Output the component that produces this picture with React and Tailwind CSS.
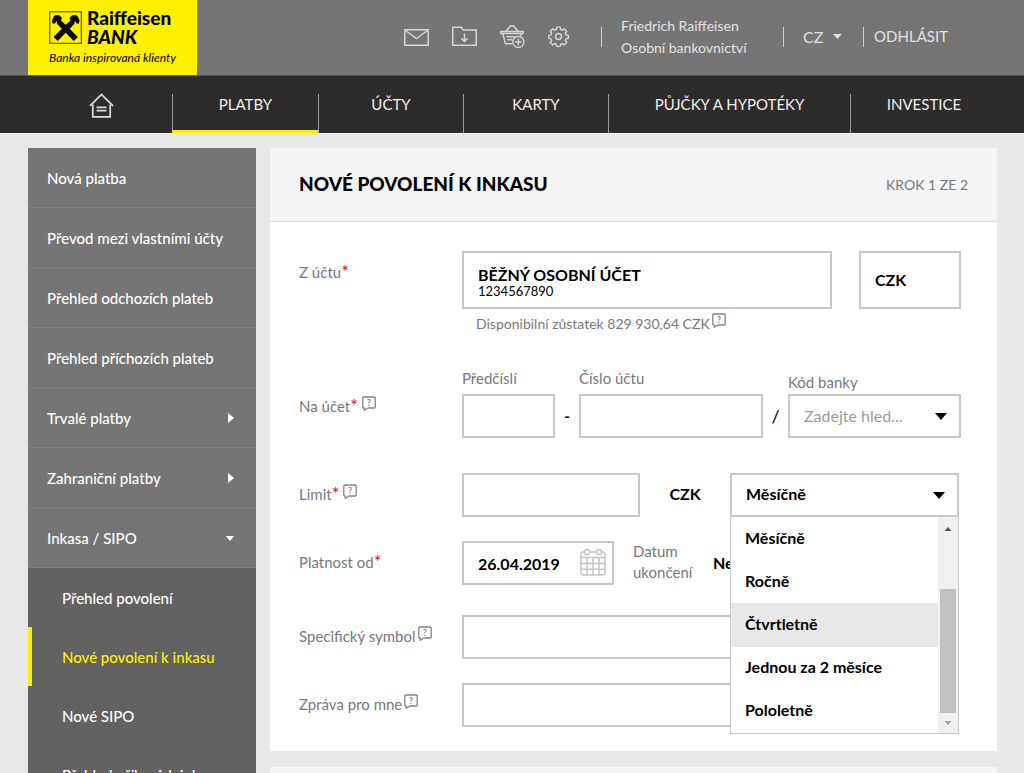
const SIDE_ITEMS = [
  { label: 'Nová platba' },
  { label: 'Převod mezi vlastními účty' },
  { label: 'Přehled odchozích plateb' },
  { label: 'Přehled příchozích plateb' },
  { label: 'Trvalé platby', arrow: 'right' },
  { label: 'Zahraniční platby', arrow: 'right' },
  { label: 'Inkasa / SIPO', arrow: 'down' },
];

const SUB_ITEMS = [
  { label: 'Přehled povolení' },
  { label: 'Nové povolení k inkasu', active: true },
  { label: 'Nové SIPO' },
  { label: 'Přehled příkazů k inkasu' },
];

const NAV_ITEMS = [
  { label: 'PLATBY', active: true },
  { label: 'ÚČTY' },
  { label: 'KARTY' },
  { label: 'PŮJČKY A HYPOTÉKY' },
  { label: 'INVESTICE' },
];

const FREQUENCIES = ['Měsíčně', 'Ročně', 'Čtvrtletně', 'Jednou za 2 měsíce', 'Pololetně'];

const BOX = 'h-11 w-full min-w-0 border-2 border-[#c8c8c8] bg-white px-3.5 text-[16px] font-bold text-black outline-none';

function Caret({ className }) {
  return (
    <svg viewBox="0 0 12 7" className={className} fill="currentColor" aria-hidden="true">
      <path d="M0 0h12L6 7z" />
    </svg>
  );
}

function Help() {
  return (
    <button type="button" aria-label="Nápověda" className="block h-[15px] w-3.5 shrink-0 text-[#808285]">
      <svg viewBox="0 0 14 15" className="h-full w-full" fill="none" stroke="currentColor" aria-hidden="true">
        <path d="M1.7 1h10.6q.9 0 .9.9v9.2q0 .9-.9.9H6L2.2 14.2V12H1.7q-.9 0-.9-.9V1.900q0-.9.9-.9z" strokeWidth="1.3" strokeLinejoin="round" />
        <text x="7" y="9.700" textAnchor="middle" fontSize="8.500" fontWeight="700" fill="currentColor" stroke="none">?</text>
      </svg>
    </button>
  );
}

function Label({ htmlFor, required, help, spaced, children, className = 'pt-[11px]' }) {
  return (
    <div className={`flex items-start ${className}`}>
      <label htmlFor={htmlFor} className="leading-5">
        {children}
        {required && <span className="text-[18px] leading-none text-[#e2001a]">*</span>}
      </label>
      {help && <span className={spaced ? 'ml-1' : 'ml-0.5'}><Help /></span>}
    </div>
  );
}

function Logo() {
  return (
    <a href="#" aria-label="Raiffeisenbank" className="block h-[75px] w-[169px] bg-[#fff000] pl-[21px] pt-2 text-black">
      <span className="flex gap-1">
        <svg viewBox="0 0 34 34" className="mt-[3px] h-[34px] w-[34px] shrink-0" aria-hidden="true">
          <rect x="0.800" y="0.800" width="31.500" height="31.500" fill="none" stroke="#3a3700" strokeWidth="1" />
          <g fill="#0c0b00">
            <path d="M4.500 26 17 13.500 21.500 9.500 20.500 7.200 23 4.200 27 4 28.800 5.600 30.600 9.600 29.800 12.800 27.200 12.200 26.400 10.200 25.600 10.600 25.600 12.800 8.700 30z" />
            <path d="M28.900 26 16.400 13.500 12 9.500 13 7.200 10.500 4.200 6.500 4 4.700 5.600 2.900 9.600 3.700 12.800 6.300 12.200 7.100 10.200 7.900 10.600 7.900 12.800 24.700 30z" />
          </g>
        </svg>
        <span className="flex flex-col text-[19px] font-black leading-5">
          <span>Raiffeisen</span>
          <em className="-mt-px">BANK</em>
        </span>
      </span>
      <em className="block whitespace-nowrap pt-0.5 text-[12px] leading-[18px]">Banka inspirovaná klienty</em>
    </a>
  );
}

function HeaderIcons() {
  return (
    <div className="flex items-center gap-[23px] text-[#d6d6d6]">
      <button type="button" aria-label="Zprávy" className="w-[25px]">
        <svg viewBox="0 0 25 22" className="block h-[22px] w-[25px]" fill="none" stroke="currentColor" strokeWidth="1.5" aria-hidden="true">
          <path d="M.8 3.800h23.400v15.400H.8z" />
          <path d="M1 4l11.500 8.500L24 4" />
        </svg>
      </button>
      <button type="button" aria-label="Dokumenty" className="w-[25px]">
        <svg viewBox="0 0 25 22" className="block h-[22px] w-[25px]" fill="none" stroke="currentColor" strokeWidth="1.5" aria-hidden="true">
          <path d="M.8 19.200V1.300h8.400l2 2.600h13v15.300z" />
          <path d="M12.500 7.500v8M9.500 12.500l3 3 3-3" />
        </svg>
      </button>
      <button type="button" aria-label="Košík" className="w-[25px]">
        <svg viewBox="0 0 25 24" className="block h-6 w-[25px]" fill="none" stroke="currentColor" strokeWidth="1.400" strokeLinecap="round" strokeLinejoin="round" aria-hidden="true">
          <path d="M.8 6.500h22.400v2H.8z" />
          <path d="M6 6.300 10.200 1h3.600L18 6.300" />
          <path d="M2.800 8.700 5.500 18.700h6M21.300 8.700l-.6 2" />
          <path d="M7 11.700h8M7.700 14.700h4" />
          <circle cx="18.300" cy="17" r="5.500" />
          <path d="M18.300 14.300v5.400M15.600 17H21" />
        </svg>
      </button>
      <button type="button" aria-label="Nastavení" className="w-[21px]">
        <svg viewBox="0 0 22 22" className="block h-[21px] w-[21px]" fill="none" stroke="currentColor" strokeWidth="1.500" strokeLinejoin="round" aria-hidden="true">
          <path d="M9.200 1.200h3.600l.5 2.500 1.700.7 2.100-1.400 2.500 2.500-1.400 2.100.7 1.700 2.400.5v2.900l-2.400.8-.7 1.700 1.400 2.100-2.500 2.500-2.100-1.400-1.700.7-.5 2.400H9.200l-.5-2.400-1.700-.7-2.100 1.400-2.500-2.500 1.400-2.100-.7-1.700L.8 12.700V9.800l2.300-.5.700-1.700-1.400-2.100L4.900 3 7 4.400l1.700-.7z" />
          <circle cx="11" cy="11" r="3.100" />
        </svg>
      </button>
    </div>
  );
}

function CalendarIcon() {
  return (
    <svg viewBox="0 0 26 28" className="h-7 w-[26px]" fill="none" stroke="#c4c4c4" strokeWidth="1.500" aria-hidden="true">
      <rect x="1" y="4" width="24" height="23" rx="2.500" />
      <path d="M1 9.500h24M1 15.500h24M1 21.200h24M7 9.500V27M13 9.500V27M19 9.500V27" />
      <circle cx="7" cy="4" r="2.600" fill="#fff" />
      <circle cx="19" cy="4" r="2.600" fill="#fff" />
    </svg>
  );
}

function Header() {
  return (
    <header className="flex justify-between border-b border-[#555] bg-[#757575] pl-7 pr-[76px] text-[#e2e2e2]">
      <Logo />
      <div className="flex items-center pb-0.5">
        <HeaderIcons />
        <div className="ml-8 flex h-5 items-center border-l border-[#d0d0d0] pl-[19px]">
          <p className="w-[162px] text-[14px] leading-[22px]">
            Friedrich Raiffeisen
            <br />
            Osobní bankovnictví
          </p>
        </div>
        <button type="button" className="flex h-5 w-20 items-center gap-2.5 border-l border-[#d0d0d0] pl-[19px] text-[16px]">
          CZ
          <Caret className="h-[5px] w-[9px]" />
        </button>
        <a href="#" className="flex h-5 items-center border-l border-[#d0d0d0] pl-2.5 text-[15px]">ODHLÁSIT</a>
      </div>
    </header>
  );
}

function MainNav() {
  return (
    <nav className="grid grid-cols-[144fr_146fr_145fr_145fr_242fr_147fr] border-b border-white bg-[#2d2c2a] pl-7 pr-[27px] text-[15px] text-[#f0f0f0]">
      <a href="#" aria-label="Domů" className="flex h-[57px] items-center justify-center pl-0.5 pt-0.5">
        <svg viewBox="0 0 25 25" className="h-[25px] w-[25px]" fill="none" stroke="#dcdcdc" strokeWidth="1.700" aria-hidden="true">
          <path d="M3.800 11.500v12.300h17.400V11.500" />
          <path d="M1 12.800 12.500 1.500 24 12.800" />
          <path d="M7.500 14.300h10M7.500 17.700h10" />
        </svg>
      </a>
      {NAV_ITEMS.map((item) => (
        <div key={item.label} className={`flex items-end ${item.active ? 'border-b-[3px] border-[#ffed00]' : ''}`}>
          <a
            href="#"
            className={`flex w-full justify-center border-l border-[#9a9a9a] leading-5 ${item.active ? 'h-9' : 'h-[39px]'}`}
          >
            {item.label}
          </a>
        </div>
      ))}
    </nav>
  );
}

function Sidebar() {
  return (
    <aside className="w-[228px] shrink-0 bg-[#626262] text-[15px] font-medium text-white">
      <ul className="bg-[#757575]">
        {SIDE_ITEMS.map((item) => (
          <li key={item.label} className="border-b border-[#808080]">
            <a href="#" className="flex h-[59px] items-center justify-between pl-[19px] pr-[21px] pt-px">
              {item.label}
              {item.arrow === 'right' && (
                <svg viewBox="0 0 6 10" className="mr-px h-2.5 w-1.5" fill="currentColor" aria-hidden="true">
                  <path d="M0 0v10l6-5z" />
                </svg>
              )}
              {item.arrow === 'down' && <Caret className="h-[5px] w-2.5" />}
            </a>
          </li>
        ))}
      </ul>
      <ul>
        {SUB_ITEMS.map((item) => (
          <li key={item.label}>
            <a
              href="#"
              className={`flex h-[59px] items-center border-l-4 pl-[30px] pt-px ${
                item.active ? 'border-[#fff000] text-[#fff000]' : 'border-transparent'
              }`}
            >
              {item.label}
            </a>
          </li>
        ))}
      </ul>
    </aside>
  );
}

function FrequencySelect() {
  return (
    <div className="relative w-[229px] shrink-0">
      <select aria-label="Frekvence" defaultValue="Měsíčně" className={`${BOX} appearance-none pb-0.5`}>
        {FREQUENCIES.map((f) => (
          <option key={f}>{f}</option>
        ))}
      </select>
      <Caret className="pointer-events-none absolute right-3.5 top-[19px] h-[7px] w-3 text-black" />
      <div className="absolute inset-x-0 top-[43px] z-10 flex h-[218px] border border-[#c8c8c8] bg-white">
        <ul role="listbox" aria-label="Frekvence" className="grid flex-1 grid-rows-5 text-[16px] font-bold text-black">
          {FREQUENCIES.map((f) => (
            <li
              key={f}
              role="option"
              aria-selected={f === 'Měsíčně'}
              className={`flex items-center pb-0.5 pl-3.5 ${f === 'Čtvrtletně' ? 'bg-[#e8e8e8]' : ''}`}
            >
              {f}
            </li>
          ))}
        </ul>
        <div className="flex w-5 flex-col items-center bg-[#f0f0f0] pb-2 pt-2.5">
          <Caret className="h-1 w-2 rotate-180 text-[#505050]" />
          <div className="mb-2 mt-auto h-[124px] w-4 bg-[#c1c1c1]" />
          <Caret className="h-1 w-2 text-[#a0a0a0]" />
        </div>
      </div>
    </div>
  );
}

const ROW = 'grid grid-cols-[163px_minmax(0,1fr)]';

function PaymentForm() {
  return (
    <section className="bg-white">
      <div className="flex h-[74px] items-center justify-between border-b border-[#d8d8d8] bg-[#f5f5f5] px-[29px]">
        <h1 className="text-[19px] font-black text-black">NOVÉ POVOLENÍ K INKASU</h1>
        <span className="text-[14px]">KROK 1 ZE 2</span>
      </div>
      <form className="pb-6 pl-[29px] pr-9 pt-[29px]">
        <div className={ROW}>
          <Label htmlFor="from" required>Z účtu</Label>
          <div>
            <div className="flex gap-[27px]">
              <button type="button" id="from" className="flex h-[58px] flex-1 flex-col justify-center border-2 border-[#c8c8c8] px-3.5 pt-1 text-left text-black">
                <span className="text-[16px] font-bold leading-[18px]">BĚŽNÝ OSOBNÍ ÚČET</span>
                <span className="text-[13px] leading-3.5">1234567890</span>
              </button>
              <button type="button" aria-label="Měna" className="h-[58px] w-[102px] border-2 border-[#c8c8c8] px-3.5 text-left text-[16px] font-bold text-black">CZK</button>
            </div>
            <div className="mt-1 flex gap-0.5 pl-3.5 text-[14px] leading-[22px]">
              Disponibilní zůstatek 829 930,64 CZK
              <Help />
            </div>
          </div>
        </div>

        <div className={`${ROW} mt-[33px]`}>
          <Label htmlFor="number" required help spaced className="pt-7">Na účet</Label>
          <div className="flex items-end">
            <div className="w-[93px] shrink-0">
              <label htmlFor="prefix" className="mb-1.5 block leading-5">Předčíslí</label>
              <input id="prefix" className={`${BOX} block`} />
            </div>
            <span className="w-6 text-center font-bold leading-[44px] text-black">-</span>
            <div className="min-w-0 flex-1">
              <label htmlFor="number" className="mb-1.5 block leading-5">Číslo účtu</label>
              <input id="number" className={`${BOX} block`} />
            </div>
            <span className="w-[25px] text-center text-[18px] leading-[44px] text-black">/</span>
            <div className="w-[173px] shrink-0">
              <label htmlFor="bank" className="mb-0.5 block leading-5">Kód banky</label>
              <div className="relative">
                <select id="bank" className="block h-11 w-full appearance-none border-2 border-[#c8c8c8] bg-white px-3.5 text-[16px] text-[#9b9b9b] outline-none">
                  <option>Zadejte hled...</option>
                </select>
                <Caret className="pointer-events-none absolute right-3.5 top-[19px] h-[7px] w-3 text-black" />
              </div>
            </div>
          </div>
        </div>

        <div className={`${ROW} mt-[35px]`}>
          <Label htmlFor="limit" required help spaced>Limit</Label>
          <div className="flex pr-0.5">
            <input id="limit" className={`${BOX} flex-1`} />
            <span className="w-[90px] shrink-0 text-center text-[16px] font-bold leading-[42px] text-black">CZK</span>
            <FrequencySelect />
          </div>
        </div>

        <div className={`${ROW} mt-6`}>
          <Label htmlFor="valid" required>Platnost od</Label>
          <div className="flex">
            <div className="relative w-[152px] shrink-0">
              <input id="valid" defaultValue="26.04.2019" className={BOX} />
              <button type="button" aria-label="Kalendář" className="absolute right-2 top-[7px]">
                <CalendarIcon />
              </button>
            </div>
            <span className="ml-[19px] w-20 leading-[21px]">
              Datum
              <br />
              ukončení
            </span>
            <span className="text-[16px] font-bold leading-[44px] text-black">Neurčito</span>
          </div>
        </div>

        <div className={`${ROW} mt-[30px] pr-0.5`}>
          <Label htmlFor="symbol" help>Specifický symbol</Label>
          <input id="symbol" className={BOX} />
        </div>

        <div className={`${ROW} mt-6 pr-0.5`}>
          <Label htmlFor="message" help>Zpráva pro mne</Label>
          <input id="message" className={BOX} />
        </div>
      </form>
    </section>
  );
}

export default function App() {
  return (
    <div className="h-screen overflow-hidden bg-[#e8e8e8] font-['Lato','Open_Sans',sans-serif] text-[15px] text-[#77787b]">
      <Header />
      <MainNav />
      <div className="flex gap-3.5 pl-7 pr-[27px] pt-3.5">
        <Sidebar />
        <main className="flex min-w-0 flex-1 flex-col gap-4">
          <PaymentForm />
          <section className="h-[74px] bg-[#f5f5f5]" />
        </main>
      </div>
    </div>
  );
}
